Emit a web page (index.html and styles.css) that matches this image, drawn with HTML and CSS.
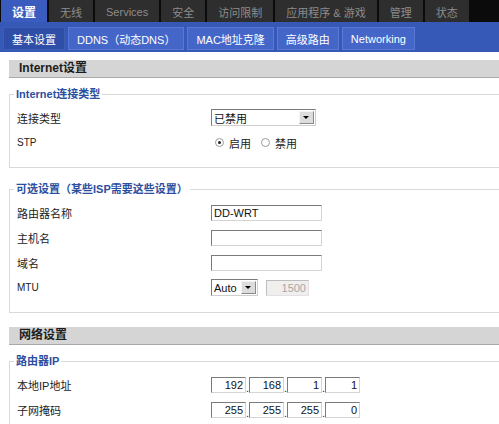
FILE: index.html
```html
<!DOCTYPE html>
<html lang="zh-CN">
<head>
<meta charset="utf-8">
<title>DD-WRT 基本设置</title>
<link rel="stylesheet" href="styles.css">
</head>
<body>
<div class="topnav">
  <span class="tab active">设置</span>
  <span class="tab">无线</span>
  <span class="tab">Services</span>
  <span class="tab">安全</span>
  <span class="tab">访问限制</span>
  <span class="tab">应用程序 &amp; 游戏</span>
  <span class="tab">管理</span>
  <span class="tab">状态</span>
</div>
<div class="subnav">
  <span class="sub active">基本设置</span>
  <span class="sub">DDNS（动态DNS）</span>
  <span class="sub">MAC地址克隆</span>
  <span class="sub">高级路由</span>
  <span class="sub">Networking</span>
</div>
<div class="main">
  <h2 class="hdr">Internet设置</h2>
  <fieldset class="fs fs1">
    <legend>Internet连接类型</legend>
    <div class="row"><span class="lbl">连接类型</span>
      <div class="select sel-wide"><span class="val">已禁用</span><span class="arrow"></span></div>
    </div>
    <div class="row"><span class="lbl lat">STP</span>
      <div class="radios">
        <span class="radio on"></span><span class="rtext">启用</span>
        <span class="radio"></span><span class="rtext">禁用</span>
      </div>
    </div>
  </fieldset>

  <fieldset class="fs fs2">
    <legend>可选设置（某些ISP需要这些设置）</legend>
    <div class="row"><span class="lbl">路由器名称</span><span class="inp txt">DD-WRT</span></div>
    <div class="row"><span class="lbl">主机名</span><span class="inp txt"></span></div>
    <div class="row"><span class="lbl">域名</span><span class="inp txt"></span></div>
    <div class="row"><span class="lbl lat">MTU</span>
      <div class="select sel-small"><span class="val">Auto</span><span class="arrow"></span></div>
      <span class="inp mtu">1500</span>
    </div>
  </fieldset>

  <h2 class="hdr hdr2">网络设置</h2>
  <fieldset class="fs fs3">
    <legend>路由器IP</legend>
    <div class="row"><span class="lbl">本地IP地址</span>
      <div class="ip"><span class="inp oct">192</span><span class="dot">.</span><span class="inp oct">168</span><span class="dot">.</span><span class="inp oct">1</span><span class="dot">.</span><span class="inp oct">1</span></div>
    </div>
    <div class="row"><span class="lbl">子网掩码</span>
      <div class="ip"><span class="inp oct">255</span><span class="dot">.</span><span class="inp oct">255</span><span class="dot">.</span><span class="inp oct">255</span><span class="dot">.</span><span class="inp oct">0</span></div>
    </div>
  </fieldset>
</div>
</body>
</html>
```

FILE: styles.css
```css
html, body {
  margin: 0;
  padding: 0;
  background: #fff;
  overflow: hidden;
}
body {
  width: 499px;
  height: 424px;
  font-family: "Liberation Sans", "Noto Sans CJK SC", sans-serif;
  font-size: 11px;
  color: #222;
}

/* top tabs */
.topnav {
  height: 22px;
  background: #0b0b0b;
  display: flex;
  gap: 2px;
  padding-left: 1px;
  overflow: hidden;
}
.tab {
  display: flex;
  align-items: center;
  justify-content: center;
  padding: 1px 11px 0;
  background: #2e2e2e;
  color: #8c8c8c;
  font-size: 11px;
  white-space: nowrap;
}
.tab.active {
  background: #3a5cbe;
  color: #fff;
  font-weight: bold;
  font-size: 12px;
}

/* sub tabs */
.subnav {
  height: 30px;
  box-sizing: border-box;
  background: #3658b6;
  display: flex;
  gap: 3px;
  padding: 5px 3px 2px;
  overflow: hidden;
}
.sub {
  display: flex;
  align-items: center;
  padding: 0 8px;
  background: #4466c9;
  border: 1px solid #5778d3;
  color: #fff;
  font-size: 11px;
  white-space: nowrap;
}
.sub.active {
  background: #2f4ea8;
  border-color: #3f5db4;
}

/* content */
.main {
  margin-left: 9px;
  width: 490px;
}
.hdr {
  margin: 8px 0 0;
  height: 17px;
  line-height: 17px;
  padding-left: 10px;
  background: #d5d5d5;
  border-bottom: 1px solid #a9a9a9;
  font-size: 12px;
  font-weight: bold;
  color: #1c1c1c;
}
.hdr2 {
  margin-top: 14px;
}
.fs {
  margin: 8px 0 0;
  padding: 3px 0 12px 7px;
  border: 1px solid #d9d9d9;
  border-right: none;
  min-width: 0;
}
.fs2 {
  margin-top: 13px;
}
.fs legend {
  margin-left: -3px;
  padding: 0 2px;
  height: 16px;
  line-height: 16px;
  font-size: 11px;
  font-weight: bold;
  color: #2c4f9f;
}
.row {
  display: flex;
  align-items: center;
  height: 25px;
}
.lbl {
  width: 194px;
  flex: none;
  font-size: 11px;
  color: #222;
}
.lbl.lat {
  font-size: 10px;
}

/* select */
.select {
  display: flex;
  align-items: center;
  box-sizing: border-box;
  height: 17px;
  border: 1px solid #7b7b7b;
  border-right-color: #cfcfcf;
  border-bottom-color: #cfcfcf;
  background: #fff;
  padding: 1px 1px 1px 2px;
}
.sel-wide { width: 105px; }
.sel-small { width: 47px; margin-right: 8px; }
.select .val {
  flex: 1;
  font-size: 11px;
  color: #111;
}
.arrow {
  width: 15px;
  height: 13px;
  box-sizing: border-box;
  background: #dcdcdc;
  border: 1px solid #f4f4f4;
  border-right-color: #8a8a8a;
  border-bottom-color: #8a8a8a;
  position: relative;
}
.arrow::after {
  content: "";
  position: absolute;
  left: 3px;
  top: 4px;
  border-left: 3px solid transparent;
  border-right: 3px solid transparent;
  border-top: 3px solid #000;
}

/* radios */
.radios {
  display: flex;
  align-items: center;
  padding-left: 4px;
}
.radio {
  width: 7px;
  height: 7px;
  border: 1px solid #9a9a9a;
  border-radius: 50%;
  background: #fff;
  position: relative;
  margin-right: 5px;
}
.radio.on::after {
  content: "";
  position: absolute;
  left: 2px;
  top: 2px;
  width: 3px;
  height: 3px;
  border-radius: 50%;
  background: #222;
}
.rtext {
  font-size: 11px;
  margin-right: 10px;
}

/* inputs */
.inp {
  display: flex;
  align-items: center;
  box-sizing: border-box;
  height: 16px;
  border: 1px solid #7b7b7b;
  border-right-color: #d4d4d4;
  border-bottom-color: #d4d4d4;
  background: #fff;
  font-size: 11px;
  color: #111;
  padding: 0 2px;
}
.txt { width: 111px; }
.mtu {
  width: 43px;
  justify-content: flex-end;
  background: #f1eeee;
  color: #a6a6a6;
  border-color: #bdbdbd;
  border-right-color: #e2e2e2;
  border-bottom-color: #e2e2e2;
}
.ip {
  display: flex;
  align-items: flex-end;
}
.oct {
  width: 35px;
  justify-content: flex-end;
}
.dot {
  width: 3px;
  font-size: 11px;
  line-height: 10px;
  color: #222;
}
```
